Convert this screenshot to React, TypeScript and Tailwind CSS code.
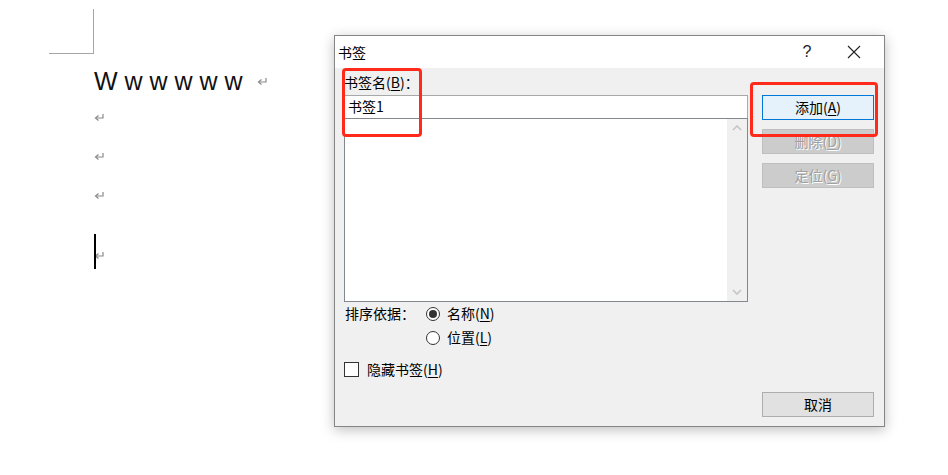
import React from "react";

const cjk = "font-['SimSun','Noto_Sans_CJK_SC',sans-serif]";

const Mark = () => (
    <svg width="11" height="9" viewBox="0 0 11 9" className="block">
        <path d="M9 1v4H2" fill="none" stroke="#8a8a8a" strokeWidth="1.2" />
        <path d="M4.5 2.5L1.5 5l3 2.5" fill="none" stroke="#8a8a8a" strokeWidth="1.2" />
    </svg>
);

const Acc = ({ k }: { k: string }) => (
    <span>(<span className="underline underline-offset-2">{k}</span>)</span>
);

const Radio = ({ on }: { on?: boolean }) => (
    <span className="w-[14px] h-[14px] rounded-full border border-[#333] bg-white flex items-center justify-center">
        {on && <span className="w-[8px] h-[8px] rounded-full bg-[#333]" />}
    </span>
);

const Btn = ({ children, kind }: { children: React.ReactNode; kind: "primary" | "disabled" | "normal" }) => {
    const cls = {
        primary: "bg-[#e5f1fb] border-[#0078d7] text-black",
        disabled: "bg-[#cccccc] border-[#bfbfbf] text-[#a0a0a0] [text-shadow:1px_1px_0_#fff]",
        normal: "bg-[#e1e1e1] border-[#adadad] text-black",
    }[kind];
    return (
        <div className={`w-[112px] h-[25px] border flex items-center justify-center text-[14px] ${cls}`}>
            {children}
        </div>
    );
};

export default function App() {
    return (
        <div className={`relative w-[948px] h-[475px] bg-white overflow-hidden ${cjk}`}>
            {/* page corner mark */}
            <div className="absolute left-[49px] top-[9px] w-[45px] h-[45px] border-r border-b border-[#a6a6a6]" />

            {/* document text */}
            <div className="pl-[94px] pt-[60px] flex flex-col">
                <div className="flex items-end gap-[14px] h-[29px]">
                    <span className="font-['Liberation_Sans',sans-serif] text-[25px] leading-none text-[#111] -mb-[5px]">W w w w w w</span>
                    <span className="mb-[3px]"><Mark /></span>
                </div>
                <div className="mt-[24px]"><Mark /></div>
                <div className="mt-[30px]"><Mark /></div>
                <div className="mt-[30px]"><Mark /></div>
                <div className="mt-[34px] relative h-[35px]">
                    <div className="absolute left-0 top-0 w-[2px] h-[35px] bg-black" />
                    <div className="pt-[17px]"><Mark /></div>
                </div>
            </div>

            {/* dialog */}
            <div className="absolute left-[334px] top-[35px] w-[551px] h-[392px] border border-[#858585] bg-[#f0f0f0] flex flex-col shadow-[0_3px_12px_rgba(0,0,0,0.25)]">
                <div className="h-[32px] bg-white flex items-center shrink-0">
                    <span className="pl-[3px] text-[14px] text-black">书签</span>
                    <span className="ml-auto w-[20px] text-center font-['Liberation_Sans',sans-serif] text-[16px] text-[#222]">?</span>
                    <span className="ml-[27px] mr-[20px] w-[20px] flex justify-center">
                        <svg width="14" height="14" viewBox="0 0 14 14">
                            <path d="M1 1l12 12M13 1L1 13" stroke="#222" strokeWidth="1.1" />
                        </svg>
                    </span>
                </div>

                <div className="flex-1 flex pl-[9px] pr-[10px] pt-[7px] text-[14px] text-black">
                    <div className="w-[404px] flex flex-col">
                        <div className="h-[15px] leading-[15px]">书签名<Acc k="B" />：</div>
                        <div className="mt-[5px] h-[23px] border border-[#a8a8a8] border-b-0 bg-white px-[3px] leading-[21px]">书签1</div>
                        <div className="h-[184px] border border-[#828790] bg-white flex justify-end">
                            <div className="w-[20px] bg-[#f0f0f0] flex flex-col items-center justify-between py-[6px]">
                                <svg width="10" height="6" viewBox="0 0 10 6"><path d="M1 5l4-4 4 4" fill="none" stroke="#c4c4c4" strokeWidth="1.6" /></svg>
                                <svg width="10" height="6" viewBox="0 0 10 6"><path d="M1 1l4 4 4-4" fill="none" stroke="#c4c4c4" strokeWidth="1.6" /></svg>
                            </div>
                        </div>
                        <div className="mt-[2px] flex">
                            <span className="w-[82px] pl-[1px] leading-[19px]">排序依据：</span>
                            <div className="flex flex-col gap-[5px]">
                                <div className="flex items-center gap-[7px] h-[19px]"><Radio on /><span>名称<Acc k="N" /></span></div>
                                <div className="flex items-center gap-[7px] h-[19px]"><Radio /><span>位置<Acc k="L" /></span></div>
                            </div>
                        </div>
                        <div className="mt-[12px] flex items-center gap-[8px]">
                            <span className="w-[15px] h-[15px] border border-[#333] bg-white" />
                            <span>隐藏书签<Acc k="H" /></span>
                        </div>
                    </div>

                    <div className="ml-auto flex flex-col pt-[20px]">
                        <div className="flex flex-col gap-[9px]">
                            <Btn kind="primary">添加<Acc k="A" /></Btn>
                            <Btn kind="disabled">删除<Acc k="D" /></Btn>
                            <Btn kind="disabled">定位<Acc k="G" /></Btn>
                        </div>
                        <div className="mt-auto mb-[9px]">
                            <Btn kind="normal">取消</Btn>
                        </div>
                    </div>
                </div>
            </div>

            {/* red annotations */}
            <div className="absolute left-[342px] top-[68px] w-[80px] h-[69px] border-[3px] border-[#ff2a1a] rounded-[4px]" />
            <div className="absolute left-[750px] top-[82px] w-[128px] h-[55px] border-[3px] border-[#ff2a1a] rounded-[4px]" />
        </div>
    );
}
